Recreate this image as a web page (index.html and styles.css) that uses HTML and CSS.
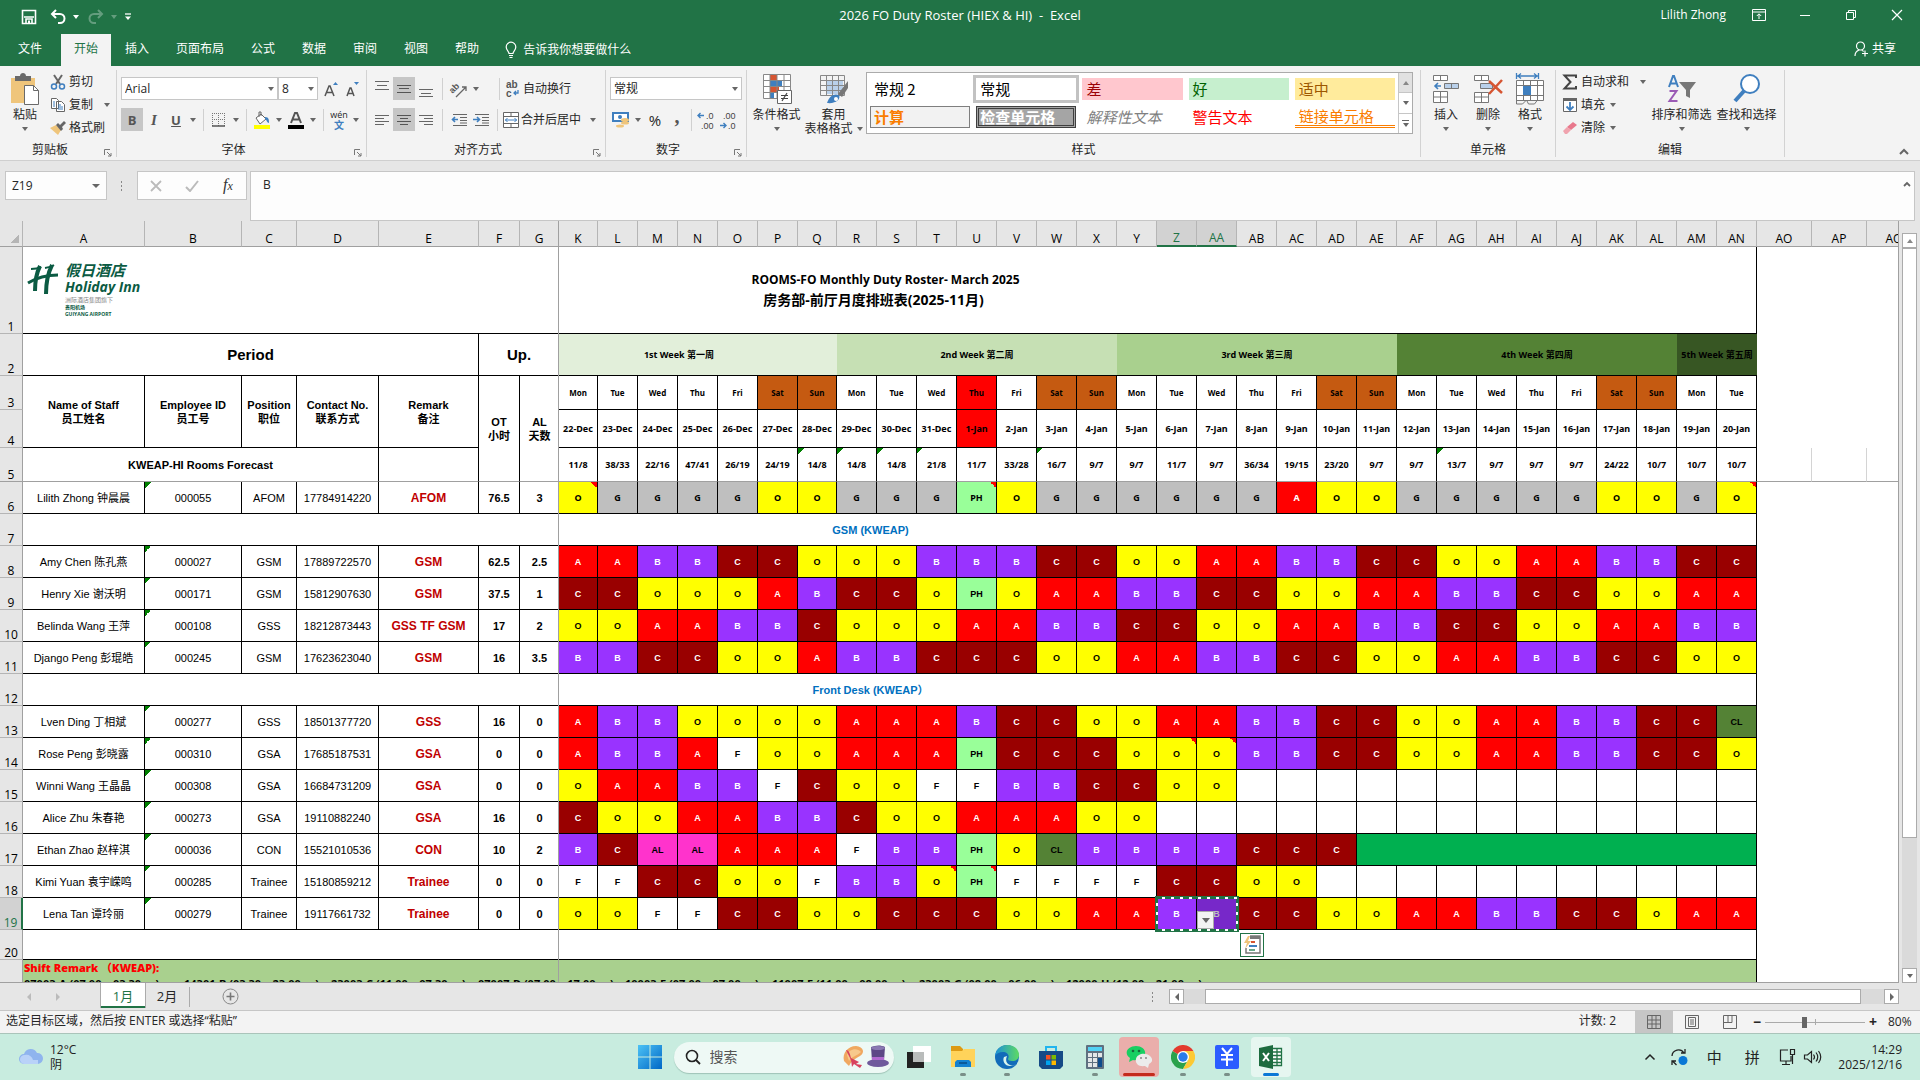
FILE: index.html
```html
<!DOCTYPE html>
<html lang="zh-CN">
<head>
<meta charset="utf-8">
<title>2026 FO Duty Roster (HIEX &amp; HI) - Excel</title>
<link rel="stylesheet" href="styles.css">
</head>
<body>
<header class="titlebar">
  <div class="quick">
    <button aria-label="保存"><svg width="16" height="16" viewBox="0 0 16 16"><path d="M1.5 1.5h13v13h-13z" fill="none" stroke="#fff" stroke-width="1.6"/><path d="M3 8h10M5 14v-4h6v4" fill="none" stroke="#fff" stroke-width="1.6"/><path d="M7 11.5h2V15H7z" fill="#fff"/></svg></button>
    <button aria-label="撤消"><svg width="16" height="16" viewBox="0 0 16 16"><path d="M6 1 2 5l4 4M2.500 5H10a4.500 4.500 0 0 1 0 9H8" fill="none" stroke="#fff" stroke-width="2"/></svg></button>
    <span class="caret light"></span>
    <button aria-label="恢复" class="dim"><svg width="16" height="16" viewBox="0 0 16 16"><path d="m10 1 4 4-4 4M13.500 5H6a4.500 4.500 0 0 0 0 9h2" fill="none" stroke="#fff" stroke-width="2"/></svg></button>
    <span class="caret light dim"></span>
    <button aria-label="自定义" class="custom"><svg width="8" height="8" viewBox="0 0 8 8"><path d="M1 1h6" stroke="#fff" stroke-width="1.300"/><path d="M1 3.500h6L4 7z" fill="#fff"/></svg></button>
  </div>
  <h1>2026 FO Duty Roster (HIEX &amp; HI)&nbsp; -&nbsp; Excel</h1>
  <div class="window">
    <span class="user">Lilith Zhong</span>
    <button aria-label="功能区选项"><svg width="14" height="12" viewBox="0 0 14 12"><path d="M.5.5h13v11H.5zM.5 3h13M7 10V5M4.800 7 7 4.800 9.200 7" fill="none" stroke="#fff"/></svg></button>
    <button aria-label="最小化"><svg width="12" height="12" viewBox="0 0 12 12"><path d="M1 6.500h10" stroke="#fff"/></svg></button>
    <button aria-label="还原"><svg width="12" height="12" viewBox="0 0 12 12"><path d="M1.500 3.500h7v7h-7zM3.500 3.500v-2h7v7h-2" fill="none" stroke="#fff"/></svg></button>
    <button aria-label="关闭"><svg width="12" height="12" viewBox="0 0 12 12"><path d="m1 1 10 10M11 1 1 11" stroke="#fff" stroke-width="1.200"/></svg></button>
  </div>
</header>
<nav class="tabs">
  <button class="file">文件</button><button class="on">开始</button><button>插入</button><button>页面布局</button><button>公式</button><button>数据</button><button>审阅</button><button>视图</button><button>帮助</button>
  <button class="tell"><svg width="12" height="18" viewBox="0 0 12 18"><path d="M4 12.500c0-2-2.800-3-2.800-6.500a4.800 4.800 0 0 1 9.600 0c0 3.500-2.800 4.500-2.800 6.500zM4 14.500h4M4.500 16.500h3" fill="none" stroke="#fff" stroke-width="1.200"/></svg>告诉我你想要做什么</button>
  <button class="share"><svg width="14" height="16" viewBox="0 0 14 16"><path d="M6.500 9a4 4 0 1 0 0-8 4 4 0 0 0 0 8zM1 15c0-3 1.500-5 4-6M8 9.500c.8.300 1.200.6 1.600 1M11 9.500v6M8 12.500h6" fill="none" stroke="#fff" stroke-width="1.200"/></svg>共享</button>
</nav>
<section class="ribbon">
  <div class="group clip">
    <div class="body">
      <button class="big paste"><svg width="30" height="32" viewBox="0 0 30 32"><path d="M1 5h24v25H1z" fill="#efc57b"/><path d="M5 3h5c0-4 6-4 6 0h5v5H5z" fill="#6a6a6a"/><path d="M14.500 12.500h9l5 5v14h-14z" fill="#fff" stroke="#6a6a6a"/><path d="M23.500 12.500v5h5" fill="none" stroke="#6a6a6a"/></svg><span>粘贴</span><i class="caret"></i></button>
      <div class="lines">
        <button><svg width="16" height="16" viewBox="0 0 16 16"><path d="m4 1 6 9M12 1 6 10" stroke="#666" stroke-width="2"/><circle cx="4" cy="12.500" r="2.500" fill="none" stroke="#3f7fbf" stroke-width="1.500"/><circle cx="12" cy="12.500" r="2.500" fill="none" stroke="#3f7fbf" stroke-width="1.500"/></svg>剪切</button>
        <button><svg width="16" height="16" viewBox="0 0 16 16"><path d="M1.500 1.500h5l2 2v8h-7zM6.500 4.500h5l3 3v7h-8z" fill="#fff" stroke="#666"/><path d="M3 5h2M3 7h2M3 9h2M8 8h3M8 10h5M8 12h5" stroke="#3f7fbf"/></svg>复制<i class="caret far"></i></button>
        <button><svg width="16" height="16" viewBox="0 0 16 16"><path d="m0 8 6-3 5 5-3 5z" fill="#efc57b"/><path d="m6 5 2-2 2 2 4-4 2 2-4 4 1 2-2 2z" fill="#666"/></svg>格式刷</button>
      </div>
    </div>
    <footer class="more-opts">剪贴板<svg class="launch" width="8" height="8" viewBox="0 0 8 8"><path d="M.5 6V.5H6M3 3l4 4M7 4v3H4" fill="none" stroke="#777"/></svg></footer>
  </div>
  <div class="group font">
    <div class="rows">
      <div class="row">
        <label class="combo w157"><select aria-label="字体"><option>Arial</option></select><i class="caret"></i></label><label class="combo w40"><select aria-label="字号"><option>8</option></select><i class="caret"></i></label>
        <button class="ic"><svg width="18" height="18" viewBox="0 0 18 18"><path d="m3 16 4-10h1l4 10M4.500 12.500h6" fill="none" stroke="#555" stroke-width="1.500"/><path d="M11 5h5l-2.500-3z" fill="#3f7fbf"/></svg></button>
        <button class="ic"><svg width="18" height="18" viewBox="0 0 18 18"><path d="m3 16 3-8h1l3 8M4 13.500h5" fill="none" stroke="#555" stroke-width="1.500"/><path d="M10 2h5l-2.500 3z" fill="#3f7fbf"/></svg></button>
      </div>
      <div class="row">
        <button class="ic on"><b>B</b></button><button class="ic serif"><em>I</em></button><button class="ic"><u>U</u></button><i class="caret"></i><s></s>
        <button class="ic"><svg width="14" height="14" viewBox="0 0 14 14"><path d="M.5 0v13M6.500 0v13M12.500 0v13M0 .5h13M0 6.500h13" fill="none" stroke="#777" stroke-dasharray="1 1"/><path d="M0 13h13" stroke="#555" stroke-width="1.500"/></svg></button><i class="caret"></i><s></s>
        <button class="ic"><svg width="18" height="18" viewBox="0 0 18 18"><path d="m3 7 5-4 5 5-6 5z" fill="#fff" stroke="#666"/><path d="M6 6V1h2v4" fill="none" stroke="#666"/><path d="M12 6c4 0 4 3 4 6-2 0-2-3-4-4z" fill="#3f7fbf"/><path d="M1 14h16v4H1z" fill="#ff0"/></svg></button><i class="caret"></i>
        <button class="ic"><svg width="18" height="18" viewBox="0 0 18 18"><path d="m4 12 4-10h2l4 10M6 8.500h6" fill="none" stroke="#555" stroke-width="2"/><path d="M1 14h16v4H1z" fill="#000"/></svg></button><i class="caret"></i><s></s>
        <button class="ic wen"><span>wén</span><span>文</span></button><i class="caret"></i>
      </div>
    </div>
    <footer class="more-opts">字体<svg class="launch" width="8" height="8" viewBox="0 0 8 8"><path d="M.5 6V.5H6M3 3l4 4M7 4v3H4" fill="none" stroke="#777"/></svg></footer>
  </div>
  <div class="group align">
    <div class="rows">
      <div class="row">
        <button class="ic"><svg width="14" height="18" viewBox="0 0 14 18"><path d="M0 1.500h14M2 5.500h10M0 9.500h14" stroke="#666"/></svg></button><button class="ic on"><svg width="14" height="18" viewBox="0 0 14 18"><path d="M0 5.500h14M2 8.500h10M0 12.500h14" stroke="#555"/></svg></button><button class="ic"><svg width="14" height="18" viewBox="0 0 14 18"><path d="M0 9.500h14M2 13.500h10M0 16.500h14" stroke="#666"/></svg></button><s></s>
        <button class="ic"><svg class="spill" width="18" height="18" viewBox="0 0 18 18"><text x="0" y="10" transform="rotate(-45 6 9)" font-size="9" font-weight="700" font-family="Liberation Sans" fill="#555">ab</text><path d="m6 17 10-10M12 7h4v4" fill="none" stroke="#666" stroke-width="1.300"/></svg></button><i class="caret"></i><s class="after"></s>
        <button class="tx"><svg width="16" height="18" viewBox="0 0 16 18"><text x="1" y="8" font-size="10" font-weight="700" font-family="Liberation Sans" fill="#555">ab</text><text x="1" y="17" font-size="10" font-weight="700" font-family="Liberation Sans" fill="#555">c</text><path d="M13 10v3H9m2-2-2 2 2 2" fill="none" stroke="#3f7fbf" stroke-width="1.300"/></svg>自动换行</button>
      </div>
      <div class="row">
        <button class="ic"><svg width="14" height="14" viewBox="0 0 14 14"><path d="M0 2.500h14M0 5.500h9M0 8.500h14M0 11.500h9" stroke="#666"/></svg></button><button class="ic on"><svg width="14" height="14" viewBox="0 0 14 14"><path d="M0 2.500h14M3 5.500h8M0 8.500h14M3 11.500h8" stroke="#555"/></svg></button><button class="ic"><svg width="14" height="14" viewBox="0 0 14 14"><path d="M0 2.500h14M5 5.500h9M0 8.500h14M5 11.500h9" stroke="#666"/></svg></button><s></s>
        <button class="ic"><svg width="16" height="14" viewBox="0 0 16 14"><path d="M2 1.500h14M9 4.500h7M9 7.500h7M2 12.500h14M9 10h7" stroke="#666"/><path d="M7 6.500H1.500M4 4 1.500 6.500 4 9" fill="none" stroke="#3f7fbf" stroke-width="1.600"/></svg></button><button class="ic"><svg width="16" height="14" viewBox="0 0 16 14"><path d="M2 1.500h14M9 4.500h7M9 7.500h7M2 12.500h14M9 10h7" stroke="#666"/><path d="M0 6.500h6M4 4l2.500 2.500L4 9" fill="none" stroke="#3f7fbf" stroke-width="1.600"/></svg></button><s></s>
        <button class="tx"><svg width="16" height="16" viewBox="0 0 16 16"><path d="M.5.5h15v15H.5zM.5 4.500h15M.5 11.500h15M8 .5v4M8 11.500v4" fill="#fff" stroke="#666"/><path d="M2 8h12M4.500 6l-2 2 2 2M11.500 6l2 2-2 2" fill="none" stroke="#3f7fbf"/></svg>合并后居中<i class="caret far"></i></button>
      </div>
    </div>
    <footer class="more-opts">对齐方式<svg class="launch" width="8" height="8" viewBox="0 0 8 8"><path d="M.5 6V.5H6M3 3l4 4M7 4v3H4" fill="none" stroke="#777"/></svg></footer>
  </div>
  <div class="group number">
    <div class="rows">
      <div class="row"><label class="combo w132"><select aria-label="数字格式"><option>常规</option></select><i class="caret"></i></label></div>
      <div class="row">
        <button class="ic"><svg width="18" height="17" viewBox="0 0 18 17"><path d="M1 2h15v8H1z" fill="#fff" stroke="#3f7fbf" stroke-width="2"/><circle cx="8" cy="6" r="2" fill="#3f7fbf"/><ellipse cx="13" cy="9" rx="4" ry="2" fill="#efc57b"/><ellipse cx="13" cy="12" rx="4" ry="1.500" fill="#efc57b"/><ellipse cx="8" cy="15" rx="4" ry="1.500" fill="#efc57b"/></svg></button><i class="caret"></i>
        <button class="ic pct">%</button><button class="ic comma">,</button><s></s>
        <button class="ic" aria-label="增加小数位数"><svg width="18" height="20" viewBox="0 0 18 20"><text x="9" y="9" font-size="9" font-family="Liberation Sans" fill="#444">.0</text><text x="4" y="19" font-size="9" font-family="Liberation Sans" fill="#444">.00</text><path d="M7 5.500H1m2.500-2.500L1 5.500 3.500 8" fill="none" stroke="#3f7fbf" stroke-width="1.400"/></svg></button><button class="ic" aria-label="减少小数位数"><svg width="18" height="20" viewBox="0 0 18 20"><text x="4" y="9" font-size="9" font-family="Liberation Sans" fill="#444">.00</text><text x="9" y="19" font-size="9" font-family="Liberation Sans" fill="#444">.0</text><path d="M1 15.500h6M4.500 13 7 15.500 4.500 18" fill="none" stroke="#3f7fbf" stroke-width="1.400"/></svg></button>
      </div>
    </div>
    <footer class="more-opts">数字<svg class="launch" width="8" height="8" viewBox="0 0 8 8"><path d="M.5 6V.5H6M3 3l4 4M7 4v3H4" fill="none" stroke="#777"/></svg></footer>
  </div>
  <div class="group styles">
    <div class="body">
      <button class="big"><svg width="30" height="32" viewBox="0 0 30 32"><path d="M1.500 1.500h27v24h-27z" fill="#fff"/><path d="M8 2h7v5H8zM8 13h9v6H8z" fill="#d65532"/><path d="M8 8h12v5H8zM8 20h4v6H8z" fill="#3f7fbf"/><path d="M1.500 1.500h27v24h-27zM1.500 7.500h27M1.500 13.500h27M1.500 19.500h27M8 1.500v24M15 1.500v24M22 1.500v24" fill="none" stroke="#888"/><path d="M15.500 17.500h14v13h-14z" fill="#fff" stroke="#666"/><path d="M19 22.500h7M19 25.500h7M25 20l-5 8" stroke="#444" stroke-width="1.200"/></svg><span>条件格式</span><i class="caret"></i></button>
      <button class="big"><svg width="30" height="32" viewBox="0 0 30 32"><path d="M7 8h17v13H7z" fill="#b9d0ea"/><path d="M1.500 2.500h24v20h-24zM1.500 7.500h24M1.500 12.500h24M1.500 17.500h24M7.500 2.500v20M13.500 2.500v20M19.500 2.500v20" fill="none" stroke="#888"/><path d="m29 8-10 13 4 3 6-9z" fill="#777"/><path d="M8 30c2-7 7-10 12-8 2 4-3 9-12 8z" fill="#3f7fbf"/><circle cx="17" cy="26" r="2" fill="#fff"/></svg><span>套用</span><span class="second">表格格式<i class="caret"></i></span></button>
      <div class="gallery">
        <div class="cards">
          <button class="plain2">常规 2</button><button class="normal">常规</button><button class="bad">差</button><button class="good">好</button><button class="mid">适中</button>
          <button class="calc">计算</button><button class="check">检查单元格</button><button class="note">解释性文本</button><button class="warn">警告文本</button><button class="link">链接单元格</button>
        </div>
        <div class="steps"><button class="off"><i class="caret up"></i></button><button><i class="caret"></i></button><button class="more"><i class="caret"></i></button></div>
      </div>
    </div>
    <footer>样式</footer>
  </div>
  <div class="group cells">
    <div class="body">
      <button class="big"><svg width="28" height="32" viewBox="0 0 28 32"><path d="M1.500 2.500h14v5h-14zM8.500 2.500v5M1.500 18.500h14v11h-14zM8.500 18.500v11M1.500 24h14" fill="#fff" stroke="#777"/><path d="M12.500 10.500h14v5h-14zM19.500 10.500v5" fill="#b9d0ea" stroke="#777"/><path d="M9 13H3m3-3-3 3 3 3" fill="none" stroke="#3f7fbf" stroke-width="1.600"/></svg><span>插入</span><i class="caret"></i></button>
      <button class="big"><svg width="30" height="32" viewBox="0 0 30 32"><path d="M1.500 2.500h14v5h-14zM8.500 2.500v5M1.500 19.500h14v10h-14zM8.500 19.500v10M1.500 24h14" fill="#fff" stroke="#777"/><path d="M7.500 10.500h12v5h-12z" fill="#b9d0ea" stroke="#777"/><path d="m16 8 13 12M29 7 16 21" stroke="#d65532" stroke-width="2.500"/></svg><span>删除</span><i class="caret"></i></button>
      <button class="big"><svg width="30" height="32" viewBox="0 0 30 32"><path d="M1.500 0v6M23.500 0v6M2 3h21M6 .5 3 3l3 2.500M19 .5 22 3l-3 2.500" fill="none" stroke="#3f7fbf" stroke-width="1.300"/><path d="M1.500 7.500h27v20h-27zM1.500 12.500h27M1.500 22.500h27M8.500 7.500v20M15.500 7.500v20M22.500 7.500v20" fill="#fff" stroke="#777"/><path d="M8 13h8v9H8z" fill="#3f7fbf"/><path d="M1.500 27v4h6l4-4 2 4h6l3-4" fill="none" stroke="#777"/></svg><span>格式</span><i class="caret"></i></button>
    </div>
    <footer>单元格</footer>
  </div>
  <div class="group edit">
    <div class="body">
      <div class="lines">
        <button><svg width="16" height="16" viewBox="0 0 16 16"><path d="M14 4V1.500H2.500L8.500 8l-6 6.500H14V12" fill="none" stroke="#444" stroke-width="2"/></svg>自动求和<i class="caret far"></i></button>
        <button><svg width="16" height="16" viewBox="0 0 16 16"><path d="M1.500 1.500h13v13h-13z" fill="#fff" stroke="#666"/><path d="M1 1h14v3H1z" fill="#666"/><path d="M8 5v8M4.500 9.500 8 13l3.500-3.500" fill="none" stroke="#3f7fbf" stroke-width="1.800"/></svg>填充<i class="caret"></i></button>
        <button><svg width="16" height="16" viewBox="0 0 16 16"><path d="m5 7 6-5 4 3-6 5z" fill="#e8788c"/><path d="m1 11 4-4 4 3-4 4H3z" fill="#f0a3ae"/></svg>清除<i class="caret"></i></button>
      </div>
      <button class="big"><svg width="30" height="32" viewBox="0 0 30 32"><path d="m2 14 4-11h1l4 11M3.500 10.500h6" fill="none" stroke="#3f7fbf" stroke-width="2"/><path d="M2.500 18h7l-7 10h8" fill="none" stroke="#9a5bb5" stroke-width="2"/><path d="M12 9h17l-6 8v8l-4-2v-6z" fill="#777"/></svg><span>排序和筛选</span><i class="caret"></i></button>
      <button class="big"><svg width="30" height="32" viewBox="0 0 30 32"><circle cx="18" cy="11" r="9" fill="#fff" stroke="#3f7fbf" stroke-width="2"/><path d="M12 18 3 28" stroke="#3f7fbf" stroke-width="4"/></svg><span>查找和选择</span><i class="caret"></i></button>
    </div>
    <footer>编辑</footer>
  </div>
  <button class="fold" aria-label="折叠功能区"><svg width="10" height="7" viewBox="0 0 10 7"><path d="m1 6 4-4 4 4" fill="none" stroke="#666" stroke-width="2"/></svg></button>
</section>
<section class="formula">
  <label class="namebox"><input value="Z19" aria-label="名称框"><i class="caret"></i></label>
  <span class="grip"></span>
  <div class="fx"><button aria-label="取消"><svg width="12" height="12" viewBox="0 0 12 12"><path d="m1 1 10 10M11 1 1 11" stroke="#bbb" stroke-width="1.800"/></svg></button><button aria-label="输入"><svg width="14" height="12" viewBox="0 0 14 12"><path d="m1 7 4 4 8-10" fill="none" stroke="#bbb" stroke-width="2"/></svg></button><button class="fn"><i>f<small>x</small></i></button></div>
  <div class="bar"><textarea aria-label="编辑栏">B</textarea><svg width="8" height="6" viewBox="0 0 8 6"><path d="m1 5 3-3 3 3" fill="none" stroke="#666" stroke-width="1.800"/></svg></div>
</section>
<main class="work">
  <div class="sheet">
    <table id="roster"></table>
    <div class="freeze"></div>
  </div>
  <div class="vscroll"><button aria-label="向上"><i class="caret up"></i></button><div class="track"><div class="thumb"></div></div><button aria-label="向下"><i class="caret"></i></button></div>
</main>
<section class="sheetbar">
  <div class="nav"><i class="tri left"></i><i class="tri right"></i></div>
  <button class="tab on">1月</button><button class="tab">2月</button><s></s>
  <button class="add" aria-label="新工作表"><svg width="17" height="17" viewBox="0 0 17 17"><circle cx="8.500" cy="8.500" r="7.500" fill="none" stroke="#888"/><path d="M8.500 4.500v8M4.500 8.500h8" stroke="#777" stroke-width="1.600"/></svg></button>
  <span class="grip"></span>
  <div class="hscroll"><button aria-label="向左"><i class="tri left dark"></i></button><div class="track"><div class="thumb"></div></div><button aria-label="向右"><i class="tri right dark"></i></button></div>
</section>
<section class="status">
  <span>选定目标区域，然后按 ENTER 或选择“粘贴”</span>
  <span class="count">计数: 2</span>
  <button class="on" aria-label="普通"><svg width="14" height="14" viewBox="0 0 14 14"><path d="M.5.500h13v13H.5zM.5 5h13M.5 9h13M5 .5v13M9 .5v13" fill="none" stroke="#666"/></svg></button>
  <button aria-label="页面布局"><svg width="14" height="14" viewBox="0 0 14 14"><path d="M.5.500h13v13H.5zM3.500 2.500h7v9h-7zM5 5h4M5 7h4M5 9h4" fill="none" stroke="#666"/></svg></button>
  <button aria-label="分页预览"><svg width="14" height="14" viewBox="0 0 14 14"><path d="M.5.500h13v13H.5zM5 .5v7M9 .5v7M.5 7.500H9" fill="none" stroke="#666"/></svg></button>
  <div class="zoom"><b>−</b><input type="range" min="0" max="100" value="39" aria-label="缩放"><b>+</b><span>80%</span></div>
</section>
<footer class="taskbar">
  <div class="weather"><svg width="26" height="20" viewBox="0 0 26 20"><path d="M6 17a5 5 0 0 1 0-10 7 7 0 0 1 13-1 5.500 5.500 0 0 1 1 11z" fill="#8fb4ee"/><path d="M6 17a4.500 4.500 0 0 1 1-9c3-1 7 1 8 5h5v4z" fill="#b9d2f8"/></svg><p>12°C<br>阴</p></div>
  <div class="dock">
    <button class="app"><svg width="24" height="24" viewBox="0 0 24 24"><defs><linearGradient id="win" x2="1" y2="1"><stop stop-color="#4cc2f5"/><stop offset="1" stop-color="#0067c6"/></linearGradient></defs><path d="M0 0h11.500v11.500H0zM12.500 0H24v11.500H12.500zM0 12.500h11.500V24H0zM12.500 12.500H24V24H12.500z" fill="url(#win)"/></svg></button>
    <label class="search"><svg width="16" height="16" viewBox="0 0 16 16"><circle cx="7" cy="7" r="5.500" fill="none" stroke="#222" stroke-width="1.600"/><path d="m11 11 4 4" stroke="#222" stroke-width="1.800"/></svg><input placeholder="搜索" aria-label="搜索"><svg width="48" height="24" viewBox="0 0 48 24"><path d="M2 16C0 8 6 1 14 1c8 1 9 7 4 10s-8 4-11 10z" fill="#f0a860"/><path d="M5 10c2-6 10-8 14-3-4 4-9 4-12 9z" fill="#f7c98c"/><path d="M4 5c3 0 4 4 5 8l8 4-3 2 6 1-2 3-6-4-2 3-1-7z" fill="#d8425e"/><path d="M29 2c5-2 10-2 14 0l-1 14H30z" fill="#5c4886"/><ellipse cx="36" cy="18" rx="11" ry="4" fill="#6f5a9c"/><path d="M30 12h12v3H30z" fill="#b06ad0"/><ellipse cx="36" cy="3" rx="7" ry="2" fill="#8a78b2"/></svg></label>
    <button class="app"><svg width="24" height="24" viewBox="0 0 24 24"><path d="M6 1h18v16H6z" fill="#fff"/><path d="M0 7h17v16H0z" fill="#222"/><path d="M6 7h11v10H6z" fill="#b9bcbb"/></svg></button>
    <button class="app run"><svg width="24" height="24" viewBox="0 0 24 24"><path d="M0 1h9l3 3v4H0z" fill="#dd9a14"/><path d="M0 6h11l2-2h11v18H0z" fill="#ffd35a"/><path d="M4 22v-5l2-2h12l2 2v5z" fill="#1481d0"/><path d="M8 18h8" stroke="#0b5a9a" stroke-width="2"/></svg></button>
    <button class="app run"><svg width="24" height="24" viewBox="0 0 24 24"><defs><linearGradient id="edge" x2="1"><stop stop-color="#1b8fd8"/><stop offset="1" stop-color="#5edb62"/></linearGradient></defs><circle cx="12" cy="12" r="12" fill="#126bb9"/><path d="M0 11C1 4 6 0 12 0c8 0 12 5 12 10 0 4-3 6-7 6-3 0-4-1-4-2 2-4-1-7-5-7s-7 2-8 4z" fill="url(#edge)"/><path d="M9 12c-2 4 1 9 6 9 3 0 6-1 7-3-3 5-14 2-10-7z" fill="#d9f5ec"/></svg></button>
    <button class="app"><svg width="24" height="24" viewBox="0 0 24 24"><path d="M7 7V2h10v5" fill="none" stroke="#21b5ee" stroke-width="2"/><path d="M0 6h24v15l-3 3H3l-3-3z" fill="#154a86"/><path d="M7 10h4.500v4.500H7z" fill="#f25022"/><path d="M12.500 10H17v4.500h-4.500z" fill="#7fba00"/><path d="M7 15.500h4.500V20H7z" fill="#00a4ef"/><path d="M12.500 15.500H17V20h-4.500z" fill="#ffb900"/></svg></button>
    <button class="app run"><svg width="18" height="24" viewBox="0 0 18 24"><rect width="18" height="24" rx="1" fill="#5f7080"/><path d="M2 2h14v4H2z" fill="#52d2f5"/><path d="M2 8h4v4H2zM7 8h4v4H7zM12 8h4v4h-4zM2 13h4v4H2zM7 13h4v4H7zM2 18h4v4H2zM7 18h4v4H7z" fill="#e3e6e8"/><path d="M12 13h4v9h-4z" fill="#0e4b8c"/></svg></button>
    <button class="app chat"><svg width="26" height="22" viewBox="0 0 26 22"><path d="M3 16l1-4C-3 7 2 0 10 0c6 0 10 4 9 8s-8 7-12 6z" fill="#18cf62"/><path d="m22 22-3-2c-7 1-10-3-9-7 1-5 9-7 14-3 3 3 3 6-1 8z" fill="#ececec"/><circle cx="7" cy="5" r="1.300" fill="#17663b"/><circle cx="13" cy="5" r="1.300" fill="#17663b"/><circle cx="15" cy="12" r="1" fill="#888"/><circle cx="20" cy="12" r="1" fill="#888"/></svg></button>
    <button class="app run"><svg width="24" height="24" viewBox="0 0 24 24"><path d="M1.600 6A12 12 0 0 0 12 24l5-9-5-3z" fill="#2ba24c"/><path d="M12 12 1.600 6A12 12 0 0 1 22.400 6H12z" fill="#e33b2e"/><path d="M12 6h10.400A12 12 0 0 1 12 24l5.200-9z" fill="#fcc934"/><circle cx="12" cy="12" r="6" fill="#fff"/><circle cx="12" cy="12" r="4.700" fill="#2a7bea"/></svg></button>
    <button class="app run"><svg width="24" height="24" viewBox="0 0 24 24"><rect width="24" height="24" rx="2" fill="#2b5cff"/><path d="m7 3 5 6 5-6M6 10h12M6 14.500h12M12 9v12" fill="none" stroke="#fff" stroke-width="2"/></svg></button>
    <button class="app excel"><svg width="24" height="24" viewBox="0 0 24 24"><path d="M12 3.500h10.500v17H12M14 7h8M14 10.500h8M14 14h8M14 17.500h8M18 4v16" fill="#fff" stroke="#217346" stroke-width="1.300"/><path d="m0 3 14-3v24L0 21z" fill="#1d6b3f"/><path d="m4 8 6 8M10 8l-6 8" stroke="#fff" stroke-width="2"/></svg></button>
  </div>
  <div class="tray">
    <svg width="12" height="8" viewBox="0 0 12 8"><path d="m1.500 6.500 4.500-4.500 4.500 4.500" fill="none" stroke="#222" stroke-width="1.500"/></svg>
    <svg width="18" height="18" viewBox="0 0 18 18"><path d="M2 8a6.500 6.500 0 0 1 12-3M15 1v4h-4M2 17v-4h4M2.500 13l4 4" fill="none" stroke="#222" stroke-width="1.300"/><circle cx="13" cy="12.500" r="4.500" fill="#0a78d6"/></svg>
    <span class="ime">中</span><span class="ime">拼</span>
    <svg width="46" height="18" viewBox="0 0 46 18"><path d="M10 2H2.500v11H13V8M4 16.500h8M8 13v3M12.500 1.500h4v5h-4zM14.500 7v9" fill="none" stroke="#222" stroke-width="1.200"/><path d="M26.500 7h3l4-3.500v11l-4-3.500h-3zM35.500 6.500q2 2.500 0 5M38 4.500q3.500 4.500 0 9M40.500 3q4.500 6 0 12" fill="none" stroke="#222" stroke-width="1.200"/></svg>
    <p>14:29<br>2025/12/16</p>
  </div>
</footer>
<script src="roster.js"></script>
</body>
</html>
```
FILE: styles.css
```css
*{box-sizing:border-box}
body{margin:0;height:100vh;display:flex;flex-direction:column;overflow:hidden;background:#e6e6e6;color:#262626;font:12px/16px "Open Sans","Noto Sans CJK SC",sans-serif}
button,input,select,textarea{font:inherit;color:inherit;background:none;border:0;padding:0;margin:0;appearance:none;outline:0}
button{display:flex;align-items:center;justify-content:center;white-space:nowrap}
svg{display:block;flex:none}
p,h1{margin:0}
s{text-decoration:none;flex:none}
.spill{overflow:visible}
.caret{flex:none;width:0;height:0;border:3px solid transparent;border-top:4px solid #666;border-bottom:0}
.caret.up{border-top:0;border-bottom:4px solid #888}
.caret.light{border-top-color:#fff}
.dim{opacity:.3}
.tri{width:0;height:0;border:4px solid transparent}
.tri.left{border-left:0;border-right:4px solid #bbb}
.tri.right{border-right:0;border-left:4px solid #bbb}
.tri.left.dark{border-right-color:#666}
.tri.right.dark{border-left-color:#666}

.titlebar{display:grid;grid-template-columns:1fr auto 1fr;align-items:center;height:34px;flex:none;background:#217346;color:#fff}
.titlebar h1{font-size:13px;font-weight:400;line-height:30px;height:34px}
.quick{display:flex;align-items:center;gap:7px;padding-left:21px}
.quick button:nth-child(2){margin-left:6px}
.quick button:nth-child(4){margin-left:2px}
.window{display:flex;align-items:center;justify-content:flex-end;padding:0 16px 4px 0}
.window button{width:14px;margin-left:32px}
.window .user{margin-right:-6px}
.tabs{display:flex;gap:1px;height:32px;flex:none;background:#217346;color:#fff}
.tabs button{padding:0 13px 2px}
.tabs .file{width:60px}
.tabs .on{background:#f3f3f3;color:#217346}
.tabs .tell{gap:6px;padding:0 12px}
.tabs .share{margin-left:auto;padding-right:24px;gap:4px}

.ribbon{display:flex;height:95px;flex:none;padding-top:4px;background:#f3f3f3;border-bottom:1px solid #cfcfcf}
.group{display:flex;flex-direction:column;height:87px;border-right:1px solid #d2d2d2}
.group footer{display:flex;justify-content:center;position:relative;margin-top:auto;line-height:15px}
.group .more-opts{padding-right:16px}
.launch{position:absolute;right:4px;bottom:0}
.body{display:flex}
.clip{width:117px}.font{width:250px}.align{width:239px}.number{width:141px}.styles{width:674px}.cells{width:135px}.edit{width:229px}
.big{flex-direction:column;justify-content:flex-start;height:66px;padding-top:3px;line-height:14px}
.big>span{margin-top:3px}
.big>.caret{margin-top:5px}
.big>.second{display:flex;align-items:center;gap:4px;margin-top:0}
.paste{width:50px}
.lines{display:flex;flex-direction:column}
.lines button{height:23px;gap:3px;justify-content:flex-start}
.lines .caret{margin-left:2px}
.lines .far{margin-left:8px}
.rows{display:flex;flex-direction:column;gap:8px;padding:7px 0 0 4px}
.row{display:flex;align-items:center;height:23px}
.row s{width:1px;height:22px;margin:0 5px;background:#d0d0d0}
.font .row s{margin:0 4px}
.row .after{margin-left:17px}
.row .caret{margin:0 3px}
.ic{width:22px;height:23px;flex:none}
.ic.on{background:#c6c6c6}
.ic b,.ic u,.ic em{font-size:13px;color:#555;font-weight:700}
.serif em{font-family:"Liberation Serif",serif;font-size:15px}
.wen{flex-direction:column;line-height:11px;font-size:9px}
.wen span+span{color:#3f7fbf;font-size:10px;font-weight:700}
.tx{gap:2px}
.row .tx .far{margin-left:7px}
.pct{font-size:15px}
.comma{font:700 20px/10px "Liberation Serif",serif;color:#555;padding-bottom:8px}
.number .row s{margin:0 3px}
.combo{display:flex;align-items:center;height:23px;padding:0 3px;background:#fff;border:1px solid #c6c6c6}
.combo select{flex:1;min-width:0}
.combo .caret{margin:0}
.w157{width:157px}.w40{width:40px;margin-right:2px}.w132{width:132px}
.styles .big{width:57px}
.styles .body{padding-left:1px}
.gallery{display:flex;flex:1;height:62px;margin:2px 7px 0 4px;background:#fff;border:1px solid #ababab}
.cards{display:grid;grid-template-columns:repeat(5,1fr);grid-auto-rows:22px;gap:6px;flex:1;padding:5px 3px}
.cards button{justify-content:flex-start;padding-left:4px;font:15px/18px "Noto Sans CJK SC",sans-serif}
.cards .normal{box-shadow:0 0 0 3px #c2c2c2;color:#000}
.cards .plain2{color:#000}
.cards .bad{background:#ffc7ce;color:#9c0006}
.cards .good{background:#c6efce;color:#006100}
.cards .mid{background:#ffeb9c;color:#9c5700}
.cards .calc{background:#f2f2f2;border:1px solid #7f7f7f;color:#fa7d00;font-weight:700;padding-left:3px}
.cards .check{background:#a5a5a5;border:3px double #3f3f3f;color:#fff;font-weight:700;padding-left:1px}
.cards .note{color:#7f7f7f;font-style:italic}
.cards .warn{color:#f00}
.cards .link{color:#fa7d00;border-bottom:3px double #fa7d00}
.steps{display:flex;flex-direction:column;width:14px;border-left:1px solid #c6c6c6}
.steps button{flex:1}
.steps button+button{border-top:1px solid #c6c6c6}
.steps .off{background:#e1e1e1}
.steps .more{flex-direction:column;gap:2px}
.steps .more::before{content:"";width:7px;height:1px;background:#666}
.cells .body{padding:0 3px 0 4px}
.cells .big{width:42px}
.edit .body{padding-left:6px}
.edit .lines{width:87px}
.edit .big{width:65px}
.fold{margin:auto 11px 5px auto}

.formula{display:flex;align-items:flex-start;flex:none;height:60px;padding:10px 5px 0}
.namebox,.fx,.bar{display:flex;align-items:center;background:#fdfdfd;border:1px solid #c6c6c6}
.namebox{width:102px;height:29px;padding:0 6px}
.namebox input{flex:1;min-width:0}
.namebox .caret{border-width:4px 4px 0}
.grip{width:3px;height:11px;margin:9px 14px 0 13px;background:radial-gradient(circle,#888 1px,transparent 1px) 0 0/3px 4px}
.fx{width:110px;height:29px}
.fx button{flex:1}
.fn i{font:italic 400 16px/16px "Liberation Serif",serif;color:#333}
.fn small{font-size:12px}
.bar{flex:1;height:50px;margin-left:3px;align-items:flex-start;padding:5px 3px 0 12px}
.bar textarea{flex:1;height:40px;resize:none}
.bar svg{margin-top:4px}

.work{display:flex;flex:1;min-height:0}
.sheet{position:relative;flex:1;overflow:hidden;background:#fff;border-right:1px solid #a0a0a0;border-bottom:1px solid #a0a0a0}
.freeze{position:absolute;left:558px;top:0;bottom:0;width:1px;background:#a0a0a0}
.vscroll{display:flex;flex-direction:column;width:21px;padding:12px 3px 0 3px}
.vscroll button{height:15px;flex:none;background:#fff;border:1px solid #ababab}
.vscroll .track{flex:1;background:#dadada}
.vscroll .thumb{height:82%;background:#fff;border:1px solid #ababab}
#roster{width:0;table-layout:fixed;border-collapse:separate;border-spacing:0;font:11px/14px "Liberation Sans","Noto Sans CJK SC",sans-serif;color:#000}
#roster col.hd{width:23px}#roster col.a{width:122px}#roster col.b{width:97px}#roster col.c{width:55px}#roster col.d{width:82px}#roster col.e{width:100px}#roster col.f{width:41px}#roster col.g{width:39px}#roster col.day{width:40px}#roster col.x{width:55px}
#roster th,#roster td{padding:0;text-align:center;vertical-align:middle;white-space:nowrap;overflow:hidden}
#roster td{border-right:1px solid #000;border-bottom:1px solid #000}
#roster thead th{height:26px;padding-top:9px;background:#e6e6e6;font:12px/15px "Open Sans",sans-serif;border-right:1px solid #b5b5b5;border-bottom:1px solid #a0a0a0}
#roster thead .sel{background:#d2d2d2;color:#217346;border-bottom:2px solid #217346}
#roster thead .corner{background:linear-gradient(135deg,#e6e6e6 55%,#b5b5b5 55%) 10px 13px/9px 9px no-repeat #e6e6e6}
#roster tbody th{vertical-align:bottom;background:#e6e6e6;font:12px/12px "Open Sans",sans-serif;border-right:1px solid #a0a0a0;border-bottom:1px solid #b5b5b5}
#roster tbody .sel{background:#d2d2d2;color:#217346;border-right:2px solid #217346}
.r1{height:87px}.r2{height:42px}.r3{height:34px}.r4{height:38px}.r5{height:34px}.r{height:32px}.r20{height:30px}.r21{height:44px}
#roster .frozen td,#roster .frozen th,#roster td.frozen{border-bottom-color:#a0a0a0}
#roster .open{border-right:0}
#roster .out{border:0}
#roster .r5 .out{border-right:1px solid #d4d4d4;border-bottom:1px solid #a0a0a0}
.period{font-size:15px;font-weight:700}
.head{font-weight:700}
.title{font:700 12px/20px "Open Sans","Noto Sans CJK SC",sans-serif}
#roster .title{padding-right:544px}
.title p+p{font-size:14px;padding-right:24px}
#roster .section{padding-right:574px;color:#0070c0;font-weight:700}
.remark{color:#c00000;font-weight:700;font-size:12px}
.total{font-weight:700}
.week,.wd,.date,.fore,.top{font:700 9px/12px "Noto Sans","Noto Sans CJK SC",sans-serif}
.wd{font-size:8px}
.shift{font-weight:700;font-size:9px}
.w1{background:#e2efda}.w2{background:#c6e0b4}.w3{background:#a9d08e}.w4{background:#548235}.w5{background:#375623}
#roster .week{border-right:0}
#roster .w1{padding-right:38px}
.rest{background:#c55a11}.hol{background:red}
.A{background-color:red;color:#fff}.B{background-color:#93f;color:#fff}.C{background-color:#900;color:#fff}.O{background-color:#ff0}.G{background-color:#bfbfbf}.PH{background-color:#9f9}.CL{background-color:#548235}.AL{background-color:#f3c}.leave{background:#00b050}
.err{background-image:linear-gradient(to bottom right,green 50%,transparent 50%);background-size:6px 6px;background-repeat:no-repeat}
.cmt{background-image:linear-gradient(to bottom left,red 50%,transparent 50%);background-size:6px 6px;background-repeat:no-repeat;background-position:100% 0}
#roster .anchor{position:relative;overflow:visible}
#roster .picked{background:#7728c9;color:#bbb}
.ants{position:absolute;z-index:1;left:-1px;top:-1px;width:82px;height:34px;background:repeating-linear-gradient(90deg,#217346 0 6px,#fff 6px 9px) 0 0/100% 2px no-repeat,repeating-linear-gradient(90deg,#217346 0 6px,#fff 6px 9px) 0 100%/100% 2px no-repeat,repeating-linear-gradient(#217346 0 6px,#fff 6px 9px) 0 0/2px 100% no-repeat,repeating-linear-gradient(#217346 0 6px,#fff 6px 9px) 100% 0/2px 100% no-repeat;box-shadow:0 0 0 1px #217346}
.drop{position:absolute;z-index:2;left:40px;top:13px;width:17px;height:18px;background:#f3f3f3;border:1px solid #ababab}
.drop .caret{border-width:5px 4px 0}
.quickan{position:absolute;z-index:2;left:83px;top:35px;width:24px;height:24px;background:#fff;border:1px solid #217346}
#roster .logo{padding:16px 0 0 4px;vertical-align:top;text-align:left}
.brand{display:flex;gap:7px;color:#0b5b43}
.brand p{line-height:15px;font-style:italic;font-weight:700;font-size:15px}
.brand .en{font-family:"Open Sans",sans-serif;font-size:14px;line-height:17px}
.brand .ihg{font:6px/9px "Noto Sans CJK SC",sans-serif;color:#888}
.brand .ap{font:700 5px/7px "Open Sans","Noto Sans CJK SC",sans-serif}
#roster .notes{background:#a9d08e;text-align:left;vertical-align:top;font:700 11px/16px "Noto Sans","Noto Sans CJK SC",sans-serif;padding-left:1px}
.notes strong{display:block;color:red}
.notes div{display:flex}
.notes span{width:147px;white-space:pre}
.notes span:first-child{width:160px}

.sheetbar{display:flex;align-items:center;flex:none;height:27px;padding-right:21px}
.nav{display:flex;gap:25px;width:100px;padding-left:27px}
.tab{width:46px;height:25px;align-self:flex-start;font-size:13px}
.tab.on{background:#fff;color:#217346;border:solid #ababab;border-width:0 1px;box-shadow:inset 0 -2px #217346}
.sheetbar s{width:1px;height:20px;background:#ababab;margin-right:32px;margin-left:-3px}
.sheetbar .grip{margin:0 15px 0 auto}
.sheetbar .tab+.tab{padding-right:4px}
.hscroll{display:flex;width:730px}
.hscroll button{width:15px;height:15px;background:#fff;border:1px solid #ababab}
.hscroll .track{flex:1;padding:0 23px 0 21px;background:#dadada}
.hscroll .thumb{height:15px;background:#fff;border:1px solid #ababab}
.status{display:flex;align-items:stretch;flex:none;height:23px;padding:0 4px 0 6px;line-height:20px;background:#f3f3f3;border-top:1px solid #c6c6c6}
.count{margin-left:auto;margin-right:19px}
.status button{width:38px}
.status .on{background:#c6c6c6}
.zoom{display:flex;align-items:center;gap:4px;padding-left:4px}
.zoom b{width:8px;font-size:14px;text-align:center}
.zoom span{width:28px;margin-left:7px}
.zoom input{width:100px;height:16px;background:linear-gradient(#aaa,#aaa) 50% 50%/100% 1px no-repeat,linear-gradient(#aaa,#aaa) 50% 50%/1px 6px no-repeat}
.zoom input::-webkit-slider-thumb{appearance:none;width:5px;height:11px;background:#666}

.taskbar{display:grid;grid-template-columns:1fr auto 1fr;align-items:center;flex:none;height:47px;background:#c8ecdf;border-top:1px solid #aac4ba;color:#222}
.weather{display:flex;align-items:center;gap:6px;padding-left:18px}
.weather p,.tray p{line-height:15px}
.dock{display:flex;align-items:center;gap:4px}
.app{position:relative;width:40px;height:40px;border-radius:4px}
.run::after,.chat::after,.excel::after{content:"";position:absolute;bottom:1px;width:6px;height:3px;border-radius:2px;background:#7a8f88}
.chat{background:#eaaeab}
.chat::after{width:32px;background:#c42b1c}
.excel{background:#e6f6f0}
.excel::after{width:16px;background:#0a78d6}
.search{display:flex;align-items:center;width:220px;height:31px;margin-right:1px;padding:0 4px 0 11px;gap:9px;border-radius:16px;background:#eef9f5;box-shadow:0 1px 1px #9fc4b7}
.search input{flex:1;min-width:0;font-size:14px}
.search input::placeholder{color:#555;opacity:1}
.tray{display:flex;align-items:center;justify-content:flex-end;gap:14px;padding-right:18px}
.tray p{text-align:right}
.ime{width:24px;text-align:center;font-size:15px}
```
FILE: roster.js
```js
const letters = ["A","B","C","D","E","F","G"];
const days = "K L M N O P Q R S T U V W X Y Z AA AB AC AD AE AF AG AH AI AJ AK AL AM AN".split(" ");
const weekdays = ["Mon","Tue","Wed","Thu","Fri","Sat","Sun"];
const forecast = "11/8 38/33 22/16 47/41 26/19 24/19 14/8 14/8 14/8 21/8 11/7 33/28 16/7 9/7 9/7 11/7 9/7 36/34 19/15 23/20 9/7 9/7 13/7 9/7 9/7 9/7 24/22 10/7 10/7 10/7".split(" ");
const flagged = ["Q","R","S","T","W","AG"];
const staff = {
  6: ["Lilith Zhong 钟晨晨","000055","AFOM","17784914220","AFOM","76.5","3","O G G G G O O G G G PH O G G G G G G A O O G G G G G O O G O","K U AN"],
  8: ["Amy Chen 陈孔燕","000027","GSM","17889722570","GSM","62.5","2.5","A A B B C C O O O B B B C C O O A A B B C C O O A A B B C C",""],
  9: ["Henry Xie 谢沃明","000171","GSM","15812907630","GSM","37.5","1","C C O O O A B C C O PH O A A B B C C O O A A B B C C O O A A",""],
  10: ["Belinda Wang 王萍","000108","GSS","18212873443","GSS TF GSM","17","2","O O A A B B C O O O A A B B C C O O A A B B C C O O A A B B",""],
  11: ["Django Peng 彭琨皓","000245","GSM","17623623040","GSM","16","3.5","B B C C O O A B B C C C O O A A B B C C O O A A B B C C O O",""],
  13: ["Lven Ding 丁相斌","000277","GSS","18501377720","GSS","16","0","A B B O O O O A A A B C C O O A A B B C C O O A A B B C C CL",""],
  14: ["Rose Peng 彭晓露","000310","GSA","17685187531","GSA","0","0","A B B A F O O A A A PH C C C O O O B B C C O O A A B B C C O","Z AA"],
  15: ["Winni Wang 王晶晶","000308","GSA","16684731209","GSA","0","0","O A A B B F C O O F F B B C C O O",""],
  16: ["Alice Zhu 朱春艳","000273","GSA","19110882240","GSA","16","0","C O O A A B B C O O A A A O O",""],
  17: ["Ethan Zhao 赵梓淇","000036","CON","15521010536","CON","10","2","B C AL AL A A A F B B PH O CL B B B B C C C",""],
  18: ["Kimi Yuan 袁宇嵘鸣","000285","Trainee","15180859212","Trainee","0","0","F F C C O O F B B O PH F F F F C C O O","T U"],
  19: ["Lena Tan 谭玲丽","000279","Trainee","19117661732","Trainee","0","0","O O F F C C O O C C C O O A A B B C C O O A A B B C C O A A",""]
};
const out = '<td class="out"></td>'.repeat(3);
const ants = '<span class="ants"></span><button class="drop"><i class="caret"></i></button><button class="quickan"><svg width="18" height="20" viewBox="0 0 18 20"><path d="M7 1h10v17H3v-5" fill="#fff" stroke="#777" stroke-width="1.500"/><path d="M7 1h10v3H7z" fill="#777"/><path d="M8 6h4v2H8z" fill="#d65532"/><path d="M6 10h8v2H6z" fill="#3f7fbf"/><path d="M6 14h6v2H6z" fill="#6aa88a"/><path d="M5 1 1 8h3l-2 6 6-8H5l2-5z" fill="#efc57b"/></svg></button>';

function dateOf(i) {
  return i < 10 ? `${22 + i}-Dec` : `${i - 9}-Jan`;
}
function dayClass(i) {
  if (days[i] === "U") return "hol";
  return i % 7 > 4 ? "rest" : "";
}
function row(n, cls, cells) {
  const sel = n === 19 ? ' class="sel"' : "";
  return `<tr class="${cls}"><th${sel}>${n === 21 ? "" : n}</th>${cells}${out}</tr>`;
}
function shiftCell(n, code, i, comments) {
  const day = days[i];
  const cls = ["shift", code];
  if (n === 6) cls.push("top");
  if (comments.includes(day)) cls.push("cmt");
  if (n === 19 && day === "Z") cls.push("anchor");
  if (n === 19 && day === "AA") cls.push("picked");
  return `<td class="${cls.join(" ").trim()}">${code}${n === 19 && day === "Z" ? ants : ""}</td>`;
}
function staffRow(n) {
  const [name, id, pos, tel, remark, ot, al, codes, notes] = staff[n];
  const list = codes.split(" "), comments = notes.split(" ");
  let cells = `<td>${name}</td><td class="err">${id}</td><td>${pos}</td><td>${tel}</td><td class="remark">${remark}</td><td class="total">${ot}</td><td class="total open">${al}</td>`;
  cells += list.map((c, i) => shiftCell(n, c, i, comments)).join("");
  const left = days.length - list.length;
  if (n === 17) cells += `<td class="leave" colspan="${left}"></td>`;
  else cells += "<td></td>".repeat(left);
  return row(n, "r", cells);
}

let html = '<colgroup><col class="hd">' + letters.map(l => `<col class="${l.toLowerCase()}">`).join("");
html += days.map(d => `<col class="${d === "K" || d === "Q" ? "g" : "day"}">`).join("") + '<col class="x"><col class="x"><col class="x"></colgroup>';
html += '<thead><tr><th class="corner"></th>' + [...letters, ...days, "AO", "AP", "AQ"].map(l => `<th${l === "Z" || l === "AA" ? ' class="sel"' : ""}>${l}</th>`).join("") + "</tr></thead><tbody>";

html += row(1, "r1", `<td class="logo open" colspan="7"><div class="brand"><svg width="31" height="32" viewBox="0 0 31 32"><path d="M13 3Q8 13 8 28M25 2q-6 12-6 29" fill="none" stroke="#0b5b43" stroke-width="4"/><path d="M4 6q6 0 10-2M18 5q6-1 9-3" fill="none" stroke="#0b5b43" stroke-width="2"/><path d="M1 20q13-8 30-8" fill="none" stroke="#0b5b43" stroke-width="3"/></svg><div><p>假日酒店</p><p class="en">Holiday Inn</p><p class="ihg">洲际酒店集团旗下</p><p class="ap">贵阳机场<br>GUIYANG AIRPORT</p></div></div></td><td class="title" colspan="30"><p>ROOMS-FO Monthly Duty Roster- March 2025</p><p>房务部-前厅月度排班表(2025-11月)</p></td>`);
html += row(2, "r2", '<td class="period" colspan="5">Period</td><td class="period open" colspan="2">Up.</td>' + ["1st Week 第一周","2nd Week 第二周","3rd Week 第三周","4th Week 第四周","5th Week 第五周"].map((w, i) => `<td class="week w${i + 1}" colspan="${i < 4 ? 7 : 2}">${w}</td>`).join(""));
html += row(3, "r3", ["Name of Staff<br>员工姓名","Employee ID<br>员工号","Position<br>职位","Contact No.<br>联系方式","Remark<br>备注"].map(h => `<td class="head" rowspan="2">${h}</td>`).join("") + '<td class="head frozen" rowspan="3">OT<br>小时</td><td class="head frozen open" rowspan="3">AL<br>天数</td>' + days.map((d, i) => `<td class="wd ${dayClass(i)}">${weekdays[i % 7]}</td>`).join(""));
html += row(4, "r4", days.map((d, i) => `<td class="date ${d === "U" ? "hol" : ""}">${dateOf(i)}</td>`).join(""));
html += row(5, "r5 frozen", '<td class="head" colspan="4">KWEAP-HI Rooms Forecast</td><td></td>' + days.map((d, i) => `<td class="fore ${flagged.includes(d) ? "err" : ""}">${forecast[i]}</td>`).join(""));
for (let n = 6; n <= 19; n++) {
  if (staff[n]) html += staffRow(n);
  else html += row(n, "r", `<td class="open" colspan="7"></td><td class="section" colspan="30">${n === 7 ? "GSM (KWEAP)" : "Front Desk (KWEAP）"}</td>`);
}
html += row(20, "r20", '<td class="open" colspan="7"></td><td colspan="30"></td>');
const notes = ["07003-A (07:00    03:30     )","14301-B (03:30    23:00     )","23003-C (11:00    07:30     )","07007-D (07:00    17:00     )","10003-E (07:00    07:00     )","11007-F (11:00    08:00     )","23003-G (08:00    06:00     )","12000-H (12:00    21:00     )"];
html += row(21, "r21", `<td class="notes" colspan="37"><strong>Shift Remark （KWEAP):</strong><div>${notes.map(t => `<span>${t}</span>`).join("")}</div></td>`);
document.getElementById("roster").innerHTML = html + "</tbody>";
```
